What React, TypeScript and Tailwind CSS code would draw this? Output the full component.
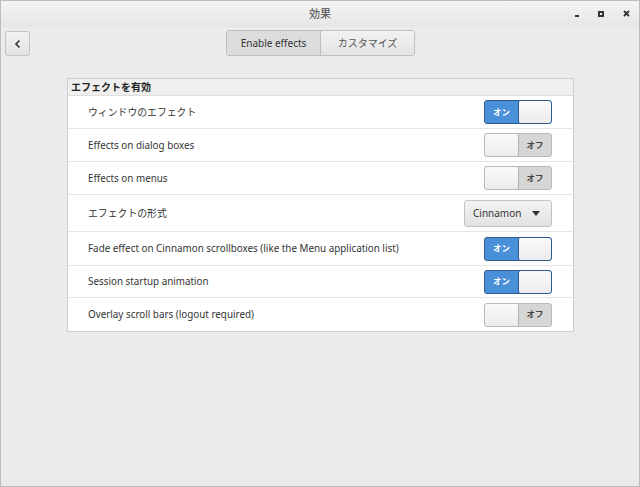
import React from "react";

const font = { fontFamily: '"Noto Sans", "Noto Sans CJK JP", sans-serif' };

function Switch({ on }: { on: boolean }) {
  if (on) {
    return (
      <div className="flex h-[24px] w-[68px] overflow-hidden rounded-[3px] border border-[#2f5a8c] bg-[#4a90d9]">
        <div className="flex w-[33px] items-center justify-center text-[8.5px] font-bold text-white">オン</div>
        <div className="flex-1 rounded-[2px] border-l border-[#2f5a8c] bg-gradient-to-b from-[#fafafa] to-[#ececec]" />
      </div>
    );
  }
  return (
    <div className="flex h-[24px] w-[68px] overflow-hidden rounded-[3px] border border-[#b8b8b8] bg-[#d6d6d6]">
      <div className="w-[34px] rounded-[2px] border-r border-[#b0b0b0] bg-gradient-to-b from-[#fafafa] to-[#ececec]" />
      <div className="flex flex-1 items-center justify-center text-[8.5px] font-bold text-[#444]">オフ</div>
    </div>
  );
}

function Row({ label, children, h = 33, last = false }: { label: string; children: React.ReactNode; h?: number; last?: boolean }) {
  return (
    <div
      className={`flex items-center justify-between bg-white pl-[20px] pr-[21px] ${last ? "" : "border-b border-[#e6e6e6]"}`}
      style={{ height: h }}
    >
      <span className="text-[9.85px] text-[#333]">{label}</span>
      {children}
    </div>
  );
}

export default function App() {
  return (
    <div className="h-[487px] w-[640px] overflow-hidden border border-[#bdbdbd] bg-[#ebebeb]" style={font}>
      {/* title bar */}
      <div className="relative flex h-[26px] items-center justify-center bg-gradient-to-b from-[#f4f4f4] to-[#e6e6e6]">
        <span className="text-[11px] text-[#4a4a4a]">効果</span>
        <div className="absolute right-[9px] top-[9px] flex items-center gap-[19px]">
          <div className="mt-[5px] h-[2px] w-[4px] bg-[#333]" />
          <div className="h-[6px] w-[6px] border-[2px] border-[#333]" />
          <svg width="7" height="7" viewBox="0 0 7 7">
            <path d="M1 1L6 6M6 1L1 6" stroke="#333" strokeWidth="1.8" />
          </svg>
        </div>
      </div>

      {/* toolbar */}
      <div className="relative h-[51px]">
        <div className="absolute left-[4px] top-[4px] flex h-[25px] w-[25px] items-center justify-center rounded-[3px] border border-[#c4c4c4] bg-gradient-to-b from-[#f2f2f2] to-[#e2e2e2]">
          <svg width="8" height="10" viewBox="0 0 8 10">
            <path d="M5.5 1.5L2 5l3.5 3.5" stroke="#333" strokeWidth="1.6" fill="none" />
          </svg>
        </div>
        <div className="absolute left-[225px] top-[3px] flex h-[26px] overflow-hidden rounded-[3px] border border-[#c0c0c0] text-[10px] text-[#333]">
          <div className="flex w-[94px] items-center justify-center border-r border-[#c0c0c0] bg-[#dcdcdc]">Enable effects</div>
          <div className="flex w-[93px] items-center justify-center bg-gradient-to-b from-[#f2f2f2] to-[#e4e4e4] text-[#555]">カスタマイズ</div>
        </div>
      </div>

      {/* settings panel */}
      <div className="ml-[66px] w-[507px] border border-[#cfcfcf]">
        <div className="flex h-[17px] items-center border-b border-[#dedede] bg-[#efefef] pl-[3px] text-[10px] font-bold text-[#222]">
          エフェクトを有効
        </div>
        <Row label="ウィンドウのエフェクト"><Switch on /></Row>
        <Row label="Effects on dialog boxes"><Switch on={false} /></Row>
        <Row label="Effects on menus"><Switch on={false} /></Row>
        <Row label="エフェクトの形式" h={37}>
          <div className="flex h-[27px] w-[88px] items-center justify-between rounded-[3px] border border-[#c2c2c2] bg-gradient-to-b from-[#f4f4f4] to-[#e2e2e2] pl-[8px] pr-[11px] text-[10px] text-[#333]">
            <span>Cinnamon</span>
            <svg width="8" height="5" viewBox="0 0 8 5">
              <path d="M0 0h8L4 5z" fill="#333" />
            </svg>
          </div>
        </Row>
        <Row label="Fade effect on Cinnamon scrollboxes (like the Menu application list)" h={34}><Switch on /></Row>
        <Row label="Session startup animation" h={32}><Switch on /></Row>
        <Row label="Overlay scroll bars (logout required)" last><Switch on={false} /></Row>
      </div>
    </div>
  );
}
